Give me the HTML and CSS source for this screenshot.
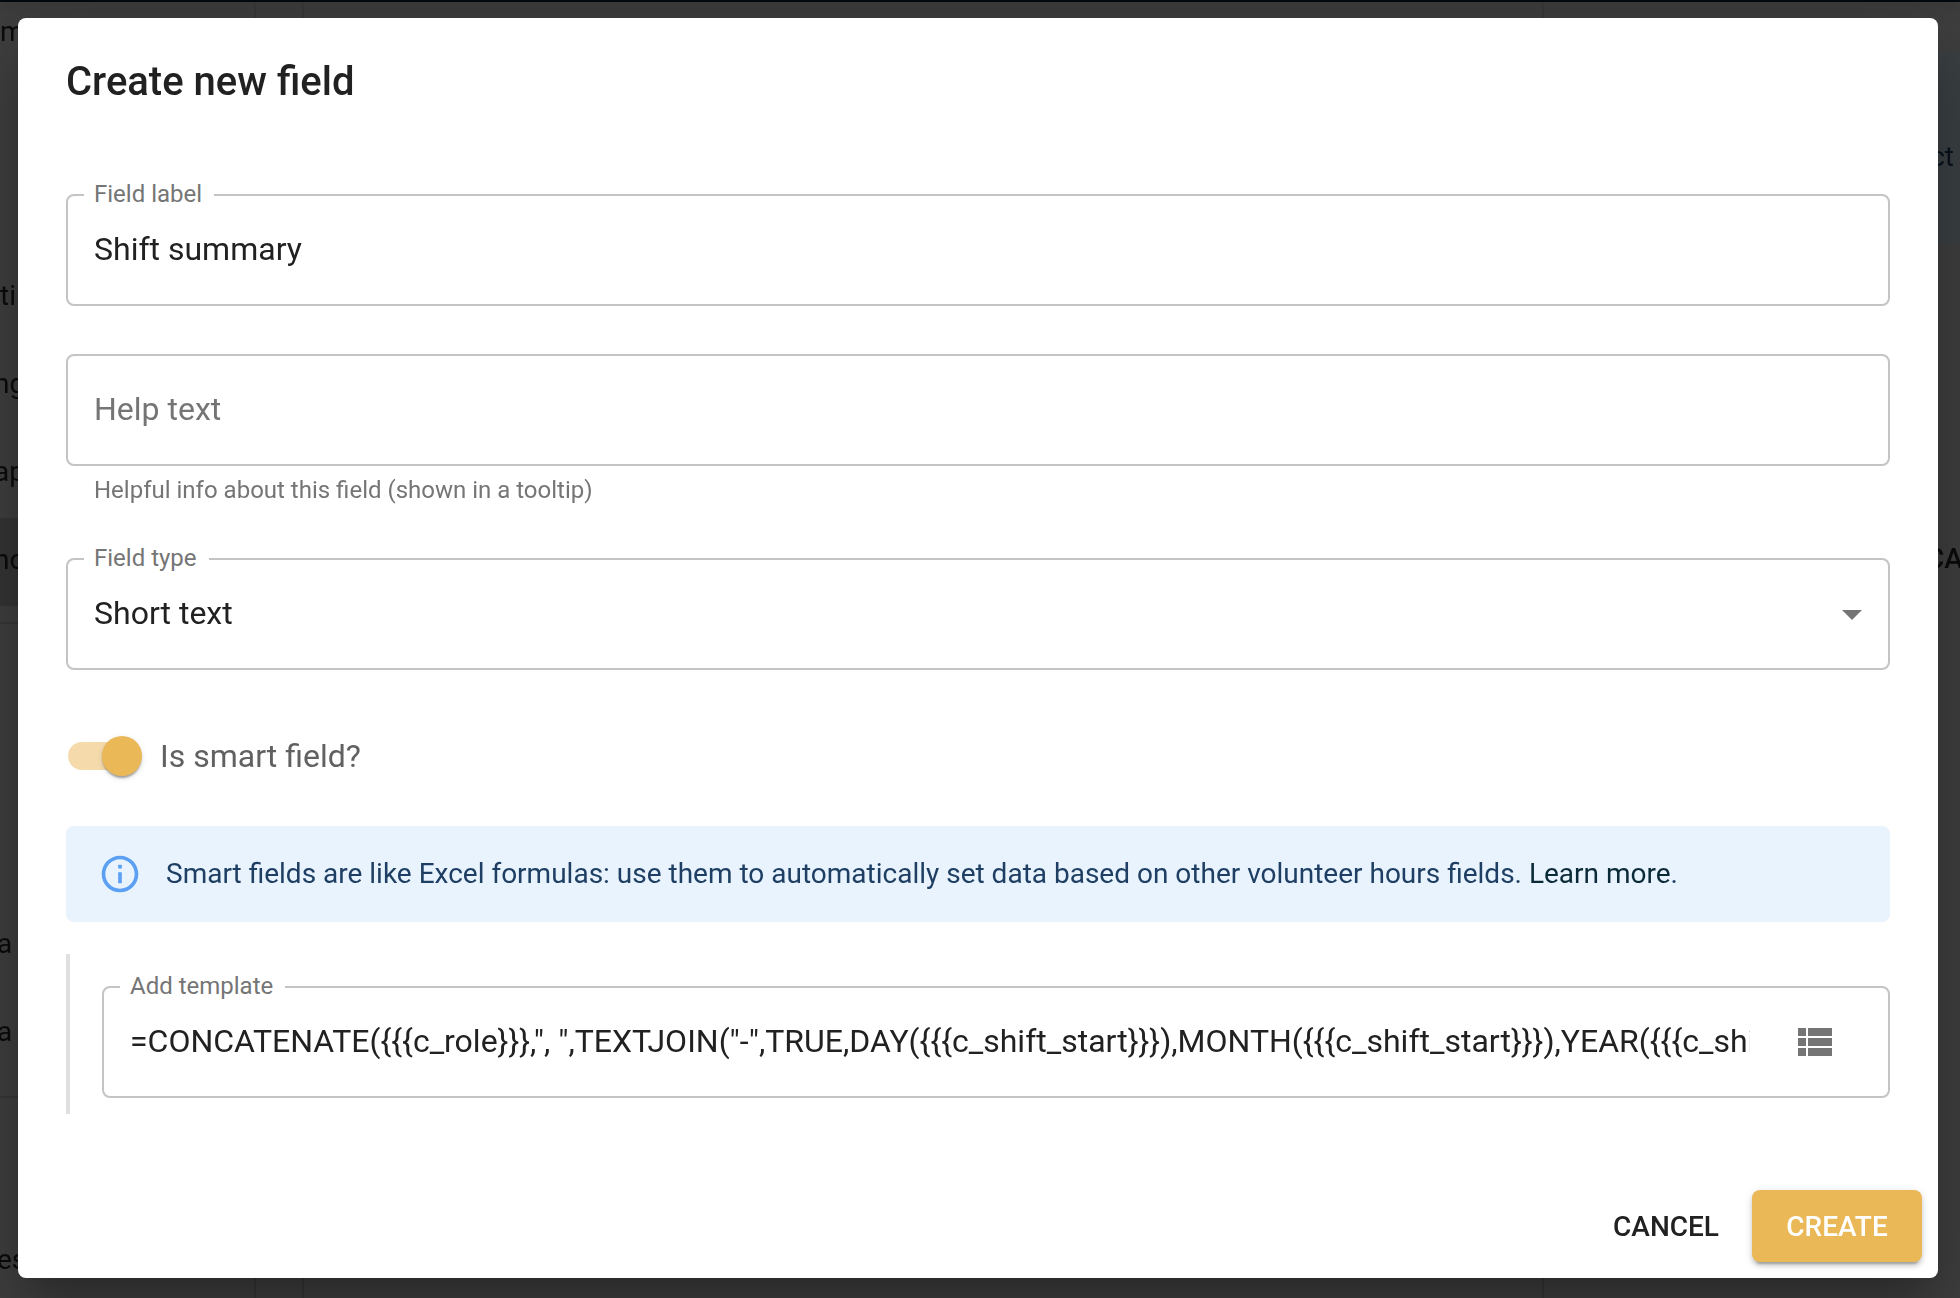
FILE: index.html
```html
<!DOCTYPE html>
<html lang="en">
<head>
<meta charset="utf-8">
<meta name="viewport" content="width=device-width, initial-scale=1">
<title>Create new field</title>
<link rel="stylesheet" href="styles.css">
</head>
<body>
<div class="app" aria-hidden="true">
  <div class="topbar"></div>
  <div class="sidebar">
    <div class="nav-group">
      <span class="nav-item nav-first">m</span>
    </div>
    <div class="nav-group nav-main">
      <span class="nav-item">tin</span>
      <span class="nav-item scrolled">ng</span>
      <span class="nav-item scrolled">ap</span>
      <span class="nav-item scrolled selected">no</span>
    </div>
    <div class="nav-group nav-extra">
      <span class="nav-item">a</span>
      <span class="nav-item">a</span>
    </div>
    <div class="nav-group nav-last">
      <span class="nav-item">es</span>
    </div>
  </div>
  <div class="workspace"><div class="panel"></div></div>
  <div class="aside">
    <div class="banner">ct</div>
    <div class="aside-action">CA</div>
  </div>
</div>

<div class="overlay">
  <form class="dialog" role="dialog" aria-labelledby="dialog-title">
    <h2 class="title" id="dialog-title">Create new field</h2>
    <div class="content">
      <div class="field">
        <label class="field-label" for="field-label">Field label</label>
        <input class="control" id="field-label" type="text" value="Shift summary">
      </div>
      <div class="field-group">
        <div class="field">
          <input class="control" id="help-text" type="text" placeholder="Help text" aria-label="Help text" aria-describedby="help-hint">
        </div>
        <p class="hint" id="help-hint">Helpful info about this field (shown in a tooltip)</p>
      </div>
      <div class="field">
        <label class="field-label" for="field-type">Field type</label>
        <select class="control" id="field-type"><option>Short text</option></select>
        <svg class="arrow" viewBox="0 0 24 24" aria-hidden="true"><path d="M7 10l5 5 5-5z"/></svg>
      </div>
      <div class="smart">
        <label class="switch-row" for="smart">
          <input class="switch" id="smart" type="checkbox" checked>
          <span>Is smart field?</span>
        </label>
        <div class="alert">
          <svg class="alert-icon" viewBox="0 0 24 24" aria-hidden="true"><path d="M11 7h2v2h-2zm0 4h2v6h-2zm1-9C6.48 2 2 6.48 2 12s4.48 10 10 10 10-4.48 10-10S17.52 2 12 2zm0 18c-4.41 0-8-3.59-8-8s3.59-8 8-8 8 3.59 8 8-3.59 8-8 8z"/></svg>
          <p class="alert-text">Smart fields are like Excel formulas: use them to automatically set data based on other volunteer hours fields. <a class="link" href="#">Learn more</a>.</p>
        </div>
        <div class="template">
          <div class="field">
            <label class="field-label" for="template">Add template</label>
            <input class="control" id="template" type="text" value="=CONCATENATE({{{c_role}}},&quot;, &quot;,TEXTJOIN(&quot;-&quot;,TRUE,DAY({{{c_shift_start}}}),MONTH({{{c_shift_start}}}),YEAR({{{c_shift_start}}})))">
            <button class="icon-button" type="button" aria-label="Insert field">
              <svg class="list-icon" viewBox="0 0 24 24" aria-hidden="true"><path d="M4 14h4v-4H4v4zm0 5h4v-4H4v4zM4 9h4V5H4v4zm5 5h12v-4H9v4zm0 5h12v-4H9v4zM9 5v4h12V5H9z"/></svg>
            </button>
          </div>
        </div>
      </div>
    </div>
    <div class="actions">
      <button class="button" type="button">CANCEL</button>
      <button class="button primary" type="submit">CREATE</button>
    </div>
  </form>
</div>
</body>
</html>
```
FILE: styles.css
```css
* { box-sizing: border-box; }

body {
  margin: 0;
  background: #3f3f3f;
  color: #212121;
  font-family: Roboto, "Liberation Sans", sans-serif;
  font-size: 32px;
}

/* Dimmed page behind the dialog */
.app {
  position: fixed;
  inset: 0;
  display: grid;
  grid-template-columns: 256px 1fr 34px;
  grid-template-rows: 2px 1fr;
  overflow: hidden;
  color: #0b0b0b;
  font-size: 28px;
}
.topbar {
  grid-column: 1 / -1;
  background: #03090d;
  box-shadow: 0 2px 16px rgba(0, 0, 0, 0.5);
}
.sidebar { border-right: 2px solid #373737; }
.nav-group { display: flex; flex-direction: column; }
.nav-item {
  height: 88px;
  line-height: 84px;
}
.nav-first { height: 60px; line-height: 60px; }
.scrolled { text-indent: -6px; }
.nav-main {
  padding: 192px 0 16px;
  border-bottom: 2px solid #373737;
}
.selected { background: #353535; }
.nav-extra {
  padding: 278px 0 18px;
  border-bottom: 2px solid #373737;
  text-indent: -3px;
}
.nav-last { padding-top: 120px; text-indent: -3px; }
.workspace { padding-left: 46px; }
.panel {
  width: 1242px;
  height: 100%;
  border: 2px solid #373737;
  border-width: 0 2px;
}
.aside { text-align: right; }
.banner {
  height: 192px;
  margin-top: 50px;
  padding: 88px 6px 0 0;
  background: #3b4043;
  color: #08121d;
  line-height: 34px;
}
.aside-action {
  margin-top: 298px;
  font-weight: 500;
}

/* Dialog */
.overlay {
  position: relative;
  display: flex;
  min-height: 100vh;
  padding: 18px 22px 20px 18px;
}
.dialog {
  flex: 1;
  display: flex;
  flex-direction: column;
  min-width: 0;
  border-radius: 8px;
  background: #fff;
  box-shadow: 0 22px 30px -14px rgba(0, 0, 0, 0.2),
    0 48px 76px 6px rgba(0, 0, 0, 0.14),
    0 18px 92px 16px rgba(0, 0, 0, 0.12);
}
.title {
  margin: 0;
  padding: 32px 48px;
  font-size: 40px;
  font-weight: 500;
  line-height: 64px;
}
.content {
  display: flex;
  flex-direction: column;
  gap: 48px;
  padding: 48px 48px 0;
}

/* Outlined fields */
.field {
  position: relative;
  display: flex;
  align-items: center;
  height: 112px;
  border: 2px solid #c4c4c4;
  border-radius: 8px;
}
.field-label {
  position: absolute;
  top: -18px;
  left: 16px;
  padding: 0 12px 0 10px;
  background: #fff;
  color: #757575;
  font-size: 24px;
  line-height: 32px;
}
.control {
  flex: 1;
  align-self: stretch;
  min-width: 0;
  margin: 0;
  padding: 0 26px 2px;
  border: 0;
  border-radius: 8px;
  outline: 0;
  background: transparent;
  color: inherit;
  font: inherit;
  appearance: none;
}
.control::placeholder { color: #757575; opacity: 1; }
.arrow {
  position: absolute;
  right: 12px;
  width: 48px;
  height: 48px;
  fill: #757575;
  pointer-events: none;
}
.hint {
  margin: 4px 28px 0;
  color: #757575;
  font-size: 24px;
  line-height: 40px;
}

/* Smart field section */
.smart {
  display: flex;
  flex-direction: column;
  gap: 32px;
}
.switch-row {
  display: flex;
  align-items: center;
  align-self: flex-start;
  gap: 18px;
  height: 76px;
  padding-left: 2px;
  color: #616161;
}
.switch {
  position: relative;
  width: 74px;
  height: 40px;
  margin: 0;
  appearance: none;
}
.switch::before {
  content: "";
  position: absolute;
  top: 6px;
  left: 0;
  width: 68px;
  height: 28px;
  border-radius: 14px;
  background: #bdbdbd;
}
.switch::after {
  content: "";
  position: absolute;
  top: 0;
  left: 0;
  width: 40px;
  height: 40px;
  border-radius: 50%;
  background: #fafafa;
  box-shadow: 0 4px 2px -2px rgba(0, 0, 0, 0.2),
    0 2px 2px rgba(0, 0, 0, 0.14),
    0 2px 6px rgba(0, 0, 0, 0.12);
}
.switch:checked::before { background: #f5dbac; }
.switch:checked::after { left: 34px; background: #ebb858; }

.alert {
  display: flex;
  align-items: center;
  gap: 24px;
  min-height: 96px;
  padding: 12px 32px;
  border-radius: 8px;
  background: #e8f3fd;
  color: #1e3f63;
  font-size: 28px;
  line-height: 40px;
}
.alert-icon {
  flex: none;
  width: 44px;
  height: 44px;
  fill: #5ba0f2;
}
.alert-text { margin: 0; }
.link { color: #0b2a38; text-decoration: none; }

.template {
  padding: 32px 0 16px 32px;
  border-left: 4px solid #e0e0e0;
}
.template .control { padding-right: 0; }
.icon-button {
  display: flex;
  margin: 0 26px 0 16px;
  padding: 24px;
  border: 0;
  background: none;
}
.list-icon { width: 48px; height: 48px; fill: #757575; }

/* Footer */
.actions {
  display: flex;
  justify-content: flex-end;
  gap: 16px;
  margin-top: auto;
  padding: 16px;
}
.button {
  min-width: 140px;
  height: 72px;
  padding: 0 16px;
  border: 0;
  border-radius: 8px;
  background: none;
  color: #212121;
  font: 500 28px Roboto, "Liberation Sans", sans-serif;
}
.primary {
  min-width: 170px;
  padding: 0 32px;
  background: #ebb858;
  color: #fff;
  box-shadow: 0 6px 2px -4px rgba(0, 0, 0, 0.2),
    0 4px 4px rgba(0, 0, 0, 0.14),
    0 2px 10px rgba(0, 0, 0, 0.12);
}
```
